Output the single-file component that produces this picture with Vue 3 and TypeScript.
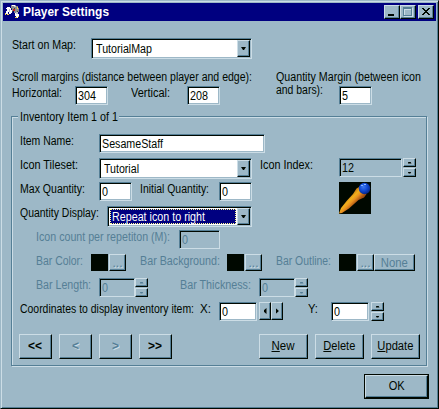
<script setup lang="ts">
import type { Directive } from 'vue'

interface NavButton {
  text: string
  width: number
  disabled: boolean
}

interface ActionButton {
  key: string
  rest: string
  width: number
}

// Condenses a run of text horizontally to the given advance width.
const vFit: Directive<HTMLElement, number> = {
  mounted(el, binding) {
    const natural = el.getBoundingClientRect().width
    if (natural > 0) el.style.transform = `scaleX(${binding.value / natural})`
  },
}

const navButtons: NavButton[] = [
  { text: '<<', width: 14, disabled: false },
  { text: '<', width: 7, disabled: true },
  { text: '>', width: 7, disabled: true },
  { text: '>>', width: 14, disabled: false },
]

const actions: ActionButton[] = [
  { key: 'N', rest: 'ew', width: 23 },
  { key: 'D', rest: 'elete', width: 32 },
  { key: 'U', rest: 'pdate', width: 36 },
]
</script>

<template>
  <main class="window">
    <header class="titlebar">
      <svg class="app-icon" width="16" height="16" viewBox="0 0 16 16" shape-rendering="crispEdges">
        <path fill="#8c8c8c" d="M6 1h5v1h2v2h1v4h-1v3h-2V9H9V7H7V5H6z" />
        <path fill="#fff" d="M2 3h3v1h1v2h1v3H6v1H4V8H3v2H1V7h1V5H1V4h1zM7 1h3v1H7zM10 9h3v1h1v2h-1v2h-2v-2h-1z" />
        <path fill="#c8c8c8" d="M4 5h1v3H4zM11 8h2v2h-2zM9 2h2v1H9z" />
        <path fill="#c82018" d="M8 5h2v2H8z" />
        <path fill="#f4d848" d="M0 9h1v2H0zM2 10h2v1H2zM12 3h1v2h-1zM10 13h2v1h-2zM13 12h1v1h-1z" />
        <path fill="#404040" d="M6 4h1v1H6zM7 7h1v1H7zM12 7h1v1h-1zM9 4h1v1H9z" />
      </svg>
      <span v-fit="86" class="fit title">Player Settings</span>
      <div class="controls">
        <button class="btn ctl" aria-label="Minimize">
          <svg width="16" height="14" viewBox="0 0 16 14" shape-rendering="crispEdges"><path fill="#000800" d="M4 9h6v2H4z" /></svg>
        </button>
        <button class="btn ctl" aria-label="Maximize" disabled>
          <svg width="16" height="14" viewBox="0 0 16 14" shape-rendering="crispEdges">
            <path fill="#ccdde6" d="M4 3h9v9H4z" />
            <path fill="#557f96" d="M3 2h9v9H3z" />
            <path fill="#ccdde6" d="M4 4h7v6H4z" />
            <path fill="#9db8c7" d="M5 5h6v5H5z" />
          </svg>
        </button>
        <button class="btn ctl close" aria-label="Close">
          <svg width="16" height="14" viewBox="0 0 16 14" shape-rendering="crispEdges">
            <path fill="#000800" d="M4 3h2v1h1v1h2V4h1V3h2v1h-1v1h-1v1H9v1h1v1h1v1h1v1h-2V9H9V8H7v1H6v1H4V9h1V8h1V7h1V6H6V5H5V4H4z" />
          </svg>
        </button>
      </div>
    </header>

    <section class="body">
      <div class="row r-map">
        <label><span v-fit="64" class="fit">Start on Map:</span></label>
        <div class="field combo">
          <span v-fit="56" class="fit">TutorialMap</span>
          <button class="btn drop" aria-label="Open"><i class="tri down"></i></button>
        </div>
      </div>

      <div class="margins">
        <div>
          <label class="line"><span v-fit="240" class="fit">Scroll margins (distance between player and edge):</span></label>
          <div class="row r-scroll">
            <label><span v-fit="50" class="fit">Horizontal:</span></label>
            <div class="field"><span v-fit="18" class="fit">304</span></div>
            <i></i>
            <label><span v-fit="39" class="fit">Vertical:</span></label>
            <div class="field"><span v-fit="18" class="fit">208</span></div>
          </div>
        </div>
        <div>
          <label class="line tight"><span v-fit="145" class="fit">Quantity Margin (between icon</span></label>
          <div class="row r-qty">
            <label><span v-fit="47" class="fit">and bars):</span></label>
            <div class="field lowered"><span v-fit="6" class="fit">5</span></div>
          </div>
        </div>
      </div>

      <section class="group">
        <h2 class="legend"><span v-fit="98" class="fit">Inventory Item 1 of 1</span></h2>

        <div class="rows">
          <div class="row r-name">
            <label><span v-fit="54" class="fit">Item Name:</span></label>
            <div class="field"><span v-fit="61" class="fit">SesameStaff</span></div>
          </div>

          <div class="row r-tileset">
            <label><span v-fit="58" class="fit">Icon Tileset:</span></label>
            <div class="field combo">
              <span v-fit="35" class="fit">Tutorial</span>
              <button class="btn drop" aria-label="Open"><i class="tri down"></i></button>
            </div>
            <i></i>
            <label><span v-fit="53" class="fit">Icon Index:</span></label>
            <div class="field plain"><span v-fit="12" class="fit">12</span></div>
            <div class="spin"><button class="btn"><i class="tri up"></i></button><button class="btn"><i class="tri down"></i></button></div>
          </div>

          <div class="row r-max">
            <label><span v-fit="65" class="fit">Max Quantity:</span></label>
            <div class="field"><span v-fit="6" class="fit">0</span></div>
            <i></i>
            <label><span v-fit="69" class="fit">Initial Quantity:</span></label>
            <div class="field"><span v-fit="6" class="fit">0</span></div>
            <i></i>
            <svg class="sprite" width="32" height="32" viewBox="0 0 32 32">
              <defs>
                <linearGradient id="wood" x1="10" y1="14" x2="18" y2="22" gradientUnits="userSpaceOnUse">
                  <stop offset="0" stop-color="#c87810" />
                  <stop offset=".3" stop-color="#f0b01c" />
                  <stop offset=".55" stop-color="#e89020" />
                  <stop offset=".9" stop-color="#a04c10" />
                </linearGradient>
                <radialGradient id="orb" cx=".4" cy=".35" r=".65">
                  <stop offset="0" stop-color="#3c78f0" />
                  <stop offset=".55" stop-color="#1048d0" />
                  <stop offset="1" stop-color="#082888" />
                </radialGradient>
              </defs>
              <path fill="#000800" d="M0 0h32v32H0z" />
              <path fill="url(#wood)" d="M0 31.500 2 26 8 18.500 14 12 17.500 6.500 21 4.500 27.500 12 25 15.500 19.500 18 10 26.500 3 31z" />
              <circle cx="25.5" cy="6.5" r="5.7" fill="url(#orb)" />
              <path fill="#8cb8ff" d="M22 3h2v1h-2zM25 2h2v1h-2z" />
            </svg>
          </div>

          <div class="row r-display">
            <label><span v-fit="79" class="fit">Quantity Display:</span></label>
            <div class="field combo focused">
              <div class="selection"><span v-fit="93" class="fit">Repeat icon to right</span></div>
              <button class="btn drop" aria-label="Open"><i class="tri down"></i></button>
            </div>
          </div>

          <div class="row r-count off">
            <label><span v-fit="134" class="fit">Icon count per repetiton (M):</span></label>
            <div class="field plain"><span v-fit="6" class="fit">0</span></div>
          </div>

          <div class="row r-color off">
            <label><span v-fit="47" class="fit">Bar Color:</span></label>
            <i class="swatch"></i>
            <button class="btn more" disabled><span>...</span></button>
            <label><span v-fit="80" class="fit">Bar Background:</span></label>
            <i class="swatch"></i>
            <button class="btn more" disabled><span>...</span></button>
            <label><span v-fit="55" class="fit">Bar Outline:</span></label>
            <i class="swatch"></i>
            <button class="btn more" disabled><span>...</span></button>
            <button class="btn none" disabled><span v-fit="27" class="fit mid">None</span></button>
          </div>

          <div class="row r-length off">
            <label><span v-fit="55" class="fit">Bar Length:</span></label>
            <div class="field plain"><span v-fit="6" class="fit">0</span></div>
            <div class="spin"><button class="btn"><i class="tri up"></i></button><button class="btn"><i class="tri down"></i></button></div>
            <i></i>
            <label><span v-fit="71" class="fit">Bar Thickness:</span></label>
            <div class="field plain"><span v-fit="6" class="fit">0</span></div>
            <div class="spin"><button class="btn"><i class="tri up"></i></button><button class="btn"><i class="tri down"></i></button></div>
          </div>

          <div class="row r-coords">
            <label><span v-fit="174" class="fit">Coordinates to display inventory item:</span></label>
            <label><span v-fit="11" class="fit">X:</span></label>
            <div class="field"><span v-fit="6" class="fit">0</span></div>
            <i></i>
            <div class="spin sideways"><button class="btn"><i class="tri left"></i></button><button class="btn"><i class="tri right"></i></button></div>
            <i></i>
            <label><span v-fit="10" class="fit">Y:</span></label>
            <div class="field"><span v-fit="6" class="fit">0</span></div>
            <i></i>
            <div class="spin"><button class="btn"><i class="tri up"></i></button><button class="btn"><i class="tri down"></i></button></div>
          </div>
        </div>

        <div class="buttons">
          <button v-for="b in navButtons" :key="b.text" class="btn nav" :disabled="b.disabled">
            <span v-fit="b.width" class="fit mid">{{ b.text }}</span>
          </button>
          <i class="grow"></i>
          <button v-for="a in actions" :key="a.key" class="btn action">
            <span v-fit="a.width" class="fit mid"><u>{{ a.key }}</u>{{ a.rest }}</span>
          </button>
        </div>
      </section>

      <div class="footer">
        <div class="default"><button class="btn"><span v-fit="16" class="fit mid">OK</span></button></div>
      </div>
    </section>
  </main>
</template>

<style>
body {
  margin: 0;
  overflow: hidden;
}
</style>

<style scoped>
.window {
  --face: #9db8c7;
  --light: #ccdde6;
  --dark: #557f96;
  --ink: #000800;
  box-sizing: border-box;
  width: 439px;
  height: 409px;
  padding: 2px 1px 1px 2px;
  border: 1px solid;
  border-color: var(--face) var(--ink) var(--ink) var(--face);
  background: var(--face);
  box-shadow: inset 1px 1px 0 var(--light), inset -1px -1px 0 var(--dark);
  color: var(--ink);
  font: 12px/14px 'Liberation Sans', Arial, sans-serif;
  white-space: nowrap;
}
.window * {
  box-sizing: border-box;
}
.fit {
  display: inline-block;
  transform-origin: 0 50%;
}
.mid {
  transform-origin: 50% 50%;
}
.titlebar {
  display: flex;
  align-items: flex-start;
  width: 433px;
  height: 18px;
  padding: 1px 2px 0;
  background: #000080;
  color: #fff;
}
.app-icon {
  margin-right: 2px;
}
.title {
  padding-top: 1px;
  font-weight: bold;
}
.controls {
  display: flex;
  margin-left: auto;
  padding-top: 1px;
}
.btn {
  display: flex;
  align-items: center;
  justify-content: center;
  margin: 0;
  padding: 0;
  border: 1px solid;
  border-color: var(--light) var(--ink) var(--ink) var(--light);
  border-radius: 0;
  background: var(--face);
  box-shadow: inset -1px -1px 0 var(--dark);
  color: inherit;
  font: inherit;
}
.btn:disabled,
.off {
  color: var(--dark);
}
.ctl {
  width: 16px;
  height: 14px;
}
.ctl svg {
  flex: none;
}
.close {
  margin-left: 2px;
}
.body {
  padding: 17px 8px 0;
}
.row {
  display: grid;
  align-items: start;
}
label {
  display: block;
  height: 14px;
  padding-left: 0.6px;
}
.field {
  height: 19px;
  padding: 2px 1px 0 2px;
  border: 1px solid;
  border-color: var(--dark) var(--light) var(--light) var(--dark);
  background: #fff;
  box-shadow: inset 1px 1px 0 var(--ink), inset -1px -1px 0 var(--face);
}
.plain {
  background: var(--face);
}
.combo {
  display: flex;
  justify-content: space-between;
  height: 21px;
  padding: 1px 1px 1px 4px;
}
.combo > .fit {
  padding-top: 2px;
}
.focused {
  padding-left: 2px;
}
.selection {
  width: 126px;
  height: 15px;
  margin-top: 1px;
  padding-left: 1px;
  border: 1px dotted #ffff90;
  background: #000080;
  color: #fff;
}
.drop {
  flex: none;
  width: 13px;
  height: 17px;
}
.tri {
  width: 5px;
  height: 3px;
  background: var(--ink);
}
.down {
  clip-path: polygon(0 0, 100% 0, 60% 100%, 40% 100%);
}
.up {
  clip-path: polygon(40% 0, 60% 0, 100% 100%, 0 100%);
}
.tri.left {
  width: 3px;
  height: 6px;
  clip-path: polygon(0 40%, 100% 0, 100% 100%, 0 60%);
}
.tri.right {
  width: 3px;
  height: 6px;
  clip-path: polygon(0 0, 100% 40%, 100% 60%, 0 100%);
}
.spin {
  display: grid;
  grid-template-rows: 9px 9px;
  gap: 1px;
  width: 13px;
  height: 19px;
}
.spin .tri.up,
.spin .tri.down {
  width: 4px;
  height: 2px;
  clip-path: polygon(0 0, 100% 0, 70% 100%, 30% 100%);
}
.spin .tri.up {
  clip-path: polygon(30% 0, 70% 0, 100% 100%, 0 100%);
}
.off .tri {
  background: var(--dark);
}
.sideways {
  grid-template: 18px / 12px 12px;
  gap: 0;
  width: 24px;
}
.r-map {
  grid-template-columns: 80px 161px;
  height: 32px;
}
.margins {
  display: grid;
  grid-template-columns: 264px 1fr;
  height: 46px;
}
.line {
  height: 16px;
}
.tight {
  height: 13px;
}
.r-scroll {
  grid-template-columns: 64px 33px 22px 57px 33px;
}
.r-qty {
  grid-template-columns: 64px 33px;
}
.lowered {
  margin-top: 3px;
}
.group {
  width: 416px;
  height: 250px;
  border: 1px solid var(--dark);
  box-shadow: 1px 1px 0 var(--light), inset 1px 1px 0 var(--light);
}
.legend {
  width: 101px;
  height: 14px;
  margin: -7px 0 10px 6px;
  padding-left: 1.5px;
  background: var(--face);
  font: inherit;
}
.rows {
  padding-left: 7px;
}
.rows .row {
  height: 24px;
}
.r-name {
  grid-template-columns: 80px 166px;
}
.r-tileset {
  grid-template-columns: 80px 153px 7px 80px 63px 14px;
}
.r-tileset .spin {
  margin-left: 1px;
}
.r-max {
  grid-template-columns: 80px 33px 7px 80px 33px 87px 32px;
}
.r-display {
  grid-template-columns: 88px 145px;
}
.r-count {
  grid-template-columns: 144px 41px;
}
.r-count,
.r-color,
.r-length {
  padding-left: 16px;
}
.r-color {
  grid-template-columns: 56px 18px 30px 88px 18px 30px 64px 18px 17px 41px;
}
.swatch {
  width: 17px;
  height: 17px;
  background: var(--ink);
}
.more {
  width: 17px;
  height: 17px;
  text-shadow: 1px 1px 0 var(--light);
}
.none {
  width: 41px;
  height: 17px;
}
.r-length {
  grid-template-columns: 64px 36px 13px 31px 80px 36px 13px;
}
.r-coords {
  grid-template-columns: 180px 20px 38px 2px 24px 24px 24px 38px 2px 13px;
}
.buttons {
  display: flex;
  gap: 7px;
  padding: 8px 6px 0 7px;
}
.nav {
  width: 33px;
  height: 25px;
  padding-bottom: 1px;
  font-weight: bold;
}
.nav:disabled {
  text-shadow: 1px 1px 0 var(--light);
}
.action {
  width: 49px;
  height: 25px;
  padding-bottom: 1px;
}
.grow {
  flex: 1;
  margin: 0 -7px;
}
.footer {
  display: flex;
  justify-content: flex-end;
  padding-top: 8px;
}
.default {
  width: 65px;
  height: 25px;
  border: 1px solid var(--ink);
}
.default .btn {
  width: 100%;
  height: 100%;
  padding-bottom: 1px;
}
</style>
